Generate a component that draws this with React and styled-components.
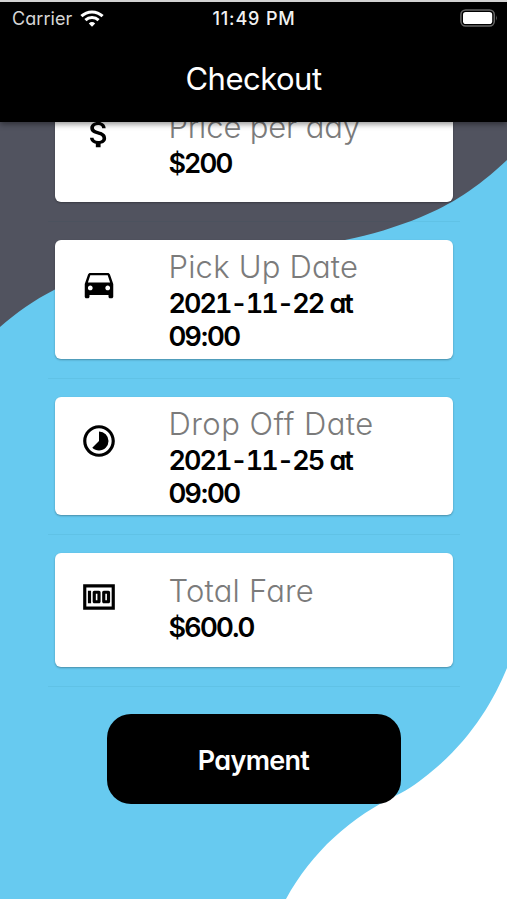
import React from 'react';
import styled, { createGlobalStyle, ThemeProvider, css } from 'styled-components';
import {
  MdAttachMoney, MdDirectionsCar, MdTimelapse, MdMoney,
} from 'react-icons/md';

const theme = {
  font: '"Inter", "Liberation Sans", sans-serif',
  colors: {
    black: '#000',
    white: '#fff',
    sky: '#67caf0',
    slate: '#51535f',
    label: '#7b7b7b',
    divider: 'rgba(0, 60, 90, 0.06)',
  },
};

const GlobalStyle = createGlobalStyle`
  * {
    box-sizing: border-box;
  }
  body {
    margin: 0;
    background: #fff;
  }
`;

const StyledScreen = styled.div`
  position: relative;
  display: flex;
  flex-direction: column;
  width: 507px;
  height: 900px;
  overflow: hidden;
  font-family: ${({ theme }) => theme.font};
  font-feature-settings: 'cv11';
  background: ${({ theme }) => theme.colors.white};
`;

const StyledBackdrop = styled.svg`
  position: absolute;
  top: 0;
  left: 0;
`;

const StyledHeader = styled.header`
  position: relative;
  z-index: 1;
  flex: none;
  height: 122px;
  border-top: 2px solid #d2d2d2;
  color: ${({ theme }) => theme.colors.white};
  background: ${({ theme }) => theme.colors.black};
  box-shadow: 0 2px 6px rgba(0, 0, 0, 0.45);
`;

const StyledStatusBar = styled.div`
  display: grid;
  grid-template-columns: 1fr auto 1fr;
  align-items: center;
  height: 32px;
  padding: 0 9px 0 12px;
`;

const StyledCarrier = styled.div`
  display: flex;
  align-items: center;
  gap: 8px;
  font-size: 18px;
  letter-spacing: 0.05px;
  color: #d6d6d6;
`;

const StyledTime = styled.div`
  margin-right: 2px;
  font-size: 18px;
  font-weight: 550;
  letter-spacing: 0.85px;
  color: #f2f2f2;
`;

const StyledBattery = styled.svg`
  justify-self: end;
`;

const StyledTitle = styled.h1`
  margin: 0;
  font-size: 31px;
  font-weight: 400;
  line-height: 89px;
  letter-spacing: -0.5px;
  text-align: center;
`;

const StyledContent = styled.main`
  position: relative;
  display: flex;
  flex-direction: column;
  align-items: center;
`;

const StyledList = styled.ul`
  width: 412px;
  margin: -33.3px 0 0;
  padding: 0;
  list-style: none;
`;

const StyledItem = styled.li`
  padding: 0 7px 18.8px;
  margin-bottom: 18.2px;
  border-bottom: 1px solid ${({ theme }) => theme.colors.divider};
`;

const StyledCard = styled.div`
  display: flex;
  height: ${({ $tall }) => ($tall ? '118.6px' : '113.5px')};
  padding-left: 25px;
  border-radius: 6px;
  background: ${({ theme }) => theme.colors.white};
  box-shadow: 0 1px 2px rgba(0, 0, 0, 0.3);
`;

const StyledIcon = styled.span`
  display: flex;
  width: 89px;
  padding-top: 25px;
  font-size: 38px;
  color: ${({ theme }) => theme.colors.black};
`;

const StyledText = styled.div`
  padding-top: ${({ $tall }) => ($tall ? '8.3px' : '18.8px')};
`;

const StyledLabel = styled.div`
  margin-bottom: 2px;
  font-size: 31px;
  font-weight: 300;
  line-height: 37px;
  letter-spacing: ${({ $spacing }) => $spacing}px;
  color: ${({ theme }) => theme.colors.label};
`;

const StyledValue = styled.div`
  font-size: 27px;
  font-weight: 560;
  line-height: 33px;
  letter-spacing: -1.7px;
  white-space: nowrap;
  color: ${({ theme }) => theme.colors.black};
  ${({ $date }) => $date && css`
    font-feature-settings: 'cv11', 'tnum';
    letter-spacing: -2px;
    word-spacing: 1px;
  `}
`;

const StyledButton = styled.button`
  width: 294px;
  height: 90px;
  margin-top: 9.4px;
  padding: 2px 0 0;
  border: 0;
  border-radius: 24px;
  font-family: inherit;
  font-feature-settings: inherit;
  font-size: 27px;
  font-weight: 560;
  letter-spacing: -0.7px;
  color: ${({ theme }) => theme.colors.white};
  background: ${({ theme }) => theme.colors.black};
`;

const rows = [
  { label: 'Price per day', spacing: -0.15, value: '$200', icon: MdAttachMoney },
  { label: 'Pick Up Date', spacing: 0.2, date: '2021-11-22 at', value: '09:00', icon: MdDirectionsCar },
  { label: 'Drop Off Date', spacing: 0.45, date: '2021-11-25 at', value: '09:00', icon: MdTimelapse },
  { label: 'Total Fare', spacing: 0.2, value: '$600.0', icon: MdMoney },
];

const Backdrop = () => (
  <StyledBackdrop width="507" height="900" viewBox="0 0 507 900">
    <path fill={theme.colors.sky} d="M0 0H507V668C494 700 472 737 437 767C425 777 413 787 401 793C350 817 312 852 286 899H0Z" />
    <path fill={theme.colors.slate} d="M0 0H507V160C476 189 452 204 421 217C397 227 370 235 345 240C240 258 100 263 54 290C34 300 16 313 0 327Z" />
  </StyledBackdrop>
);

const Wifi = () => (
  <svg width="24" height="17" viewBox="0 0 24 17" fill="none" stroke="#fff" strokeWidth="3">
    <path d="M1.4 6.2a15.2 15.2 0 0 1 21.2 0" />
    <path d="M5.4 10.2a9.6 9.6 0 0 1 13.2 0" />
    <path d="M12 16.8l-3.2-3.3a4.7 4.7 0 0 1 6.4 0z" fill="#fff" stroke="none" />
  </svg>
);

const Battery = () => (
  <StyledBattery width="38" height="18" viewBox="0 0 38 18">
    <rect x="0.9" y="0.9" width="33.4" height="16.2" rx="4.8" fill="none" stroke="#666" strokeWidth="1.5" />
    <rect x="3" y="3" width="29.2" height="12" rx="2.8" fill="#fff" />
    <path d="M36 6.2q1.8 2.8 0 5.6z" fill="#666" />
  </StyledBattery>
);

const App = () => (
  <ThemeProvider theme={theme}>
    <GlobalStyle />
    <StyledScreen>
      <Backdrop />
      <StyledHeader>
        <StyledStatusBar>
          <StyledCarrier>
            Carrier
            <Wifi />
          </StyledCarrier>
          <StyledTime>11:49 PM</StyledTime>
          <Battery />
        </StyledStatusBar>
        <StyledTitle>Checkout</StyledTitle>
      </StyledHeader>
      <StyledContent>
        <StyledList>
          {rows.map(({
            label, spacing, date, value, icon: Icon,
          }) => (
            <StyledItem key={label}>
              <StyledCard $tall={!!date}>
                <StyledIcon><Icon /></StyledIcon>
                <StyledText $tall={!!date}>
                  <StyledLabel $spacing={spacing}>{label}</StyledLabel>
                  {date && <StyledValue $date>{date}</StyledValue>}
                  <StyledValue>{value}</StyledValue>
                </StyledText>
              </StyledCard>
            </StyledItem>
          ))}
        </StyledList>
        <StyledButton type="button">Payment</StyledButton>
      </StyledContent>
    </StyledScreen>
  </ThemeProvider>
);

export default App;
